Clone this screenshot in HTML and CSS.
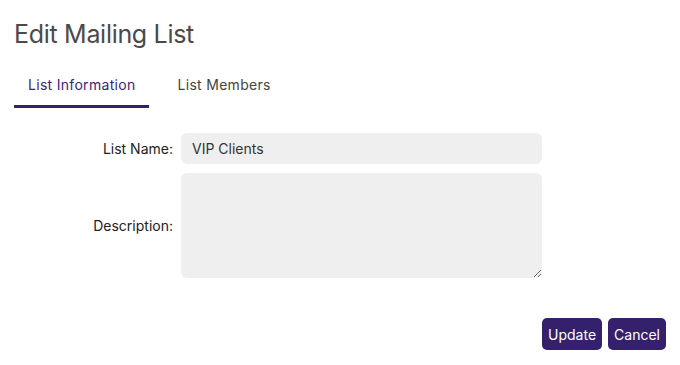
FILE: index.html
```html
<!DOCTYPE html>
<html lang="en">

<head>
    <meta charset="UTF-8">
    <meta name="viewport" content="width=device-width, initial-scale=1.0">
    <title>Edit Mailing List</title>

    <link rel="stylesheet" href="styles.css">
</head>

<body>
    <div class="page">
        <h1 class="title">Edit Mailing List</h1>

        <ul class="tabs">
            <li class="active">List Information</li>
            <li>List Members</li>
        </ul>

        <form class="form">
            <div class="row">
                <label for="name">List Name:</label>
                <input type="text" id="name" value="VIP Clients">
            </div>
            <div class="row">
                <label for="desc">Description:</label>
                <textarea id="desc"></textarea>
            </div>

            <div class="actions">
                <button type="button">Update</button>
                <button type="button">Cancel</button>
            </div>
        </form>
    </div>
</body>

</html>
```

FILE: styles.css
```css
* {
    margin: 0;
    padding: 0;
    box-sizing: border-box;
}

ul,
li {
    list-style: none;
}

body {
    font-family: Inter, "Noto Sans", sans-serif;
    color: #222;
    background: #fff;
}

.page {
    width: 680px;
    padding: 18px 14px 0 14px;
}

.title {
    font-size: 25px;
    font-weight: 400;
    color: #4a4a4a;
    line-height: 32px;
    letter-spacing: -0.3px;
}

.tabs {
    display: flex;
    margin-top: 22px;
}

.tabs>li {
    font-size: 14px;
    color: #444;
    height: 36px;
    line-height: 26px;
    padding: 0 14px;
    margin-right: 14px;
    letter-spacing: 0.3px;
}

.tabs>li.active {
    color: #3b2578;
    border-bottom: 3px solid #35206b;
}

.form {
    margin-top: 25px;
}

.row {
    display: flex;
    align-items: center;
    margin-bottom: 9px;
}

.row>label {
    width: 167px;
    text-align: right;
    padding-right: 8px;
    font-size: 14px;
    color: #222;
}

.row>input,
.row>textarea {
    width: 361px;
    border: none;
    border-radius: 6px;
    background: #efefef;
    font-family: inherit;
    font-size: 14px;
    color: #333;
    padding: 0 11px;
    outline: none;
}

.row>input {
    height: 31px;
}

.row>textarea {
    height: 105px;
    padding: 8px 11px;
}

.actions {
    display: flex;
    justify-content: flex-end;
    gap: 6px;
    margin-top: 40px;
}

.actions>button {
    background: #35206b;
    color: #fff;
    border: none;
    border-radius: 5px;
    height: 32px;
    padding: 0 6px;
    font-family: inherit;
    font-size: 14px;
}
```
